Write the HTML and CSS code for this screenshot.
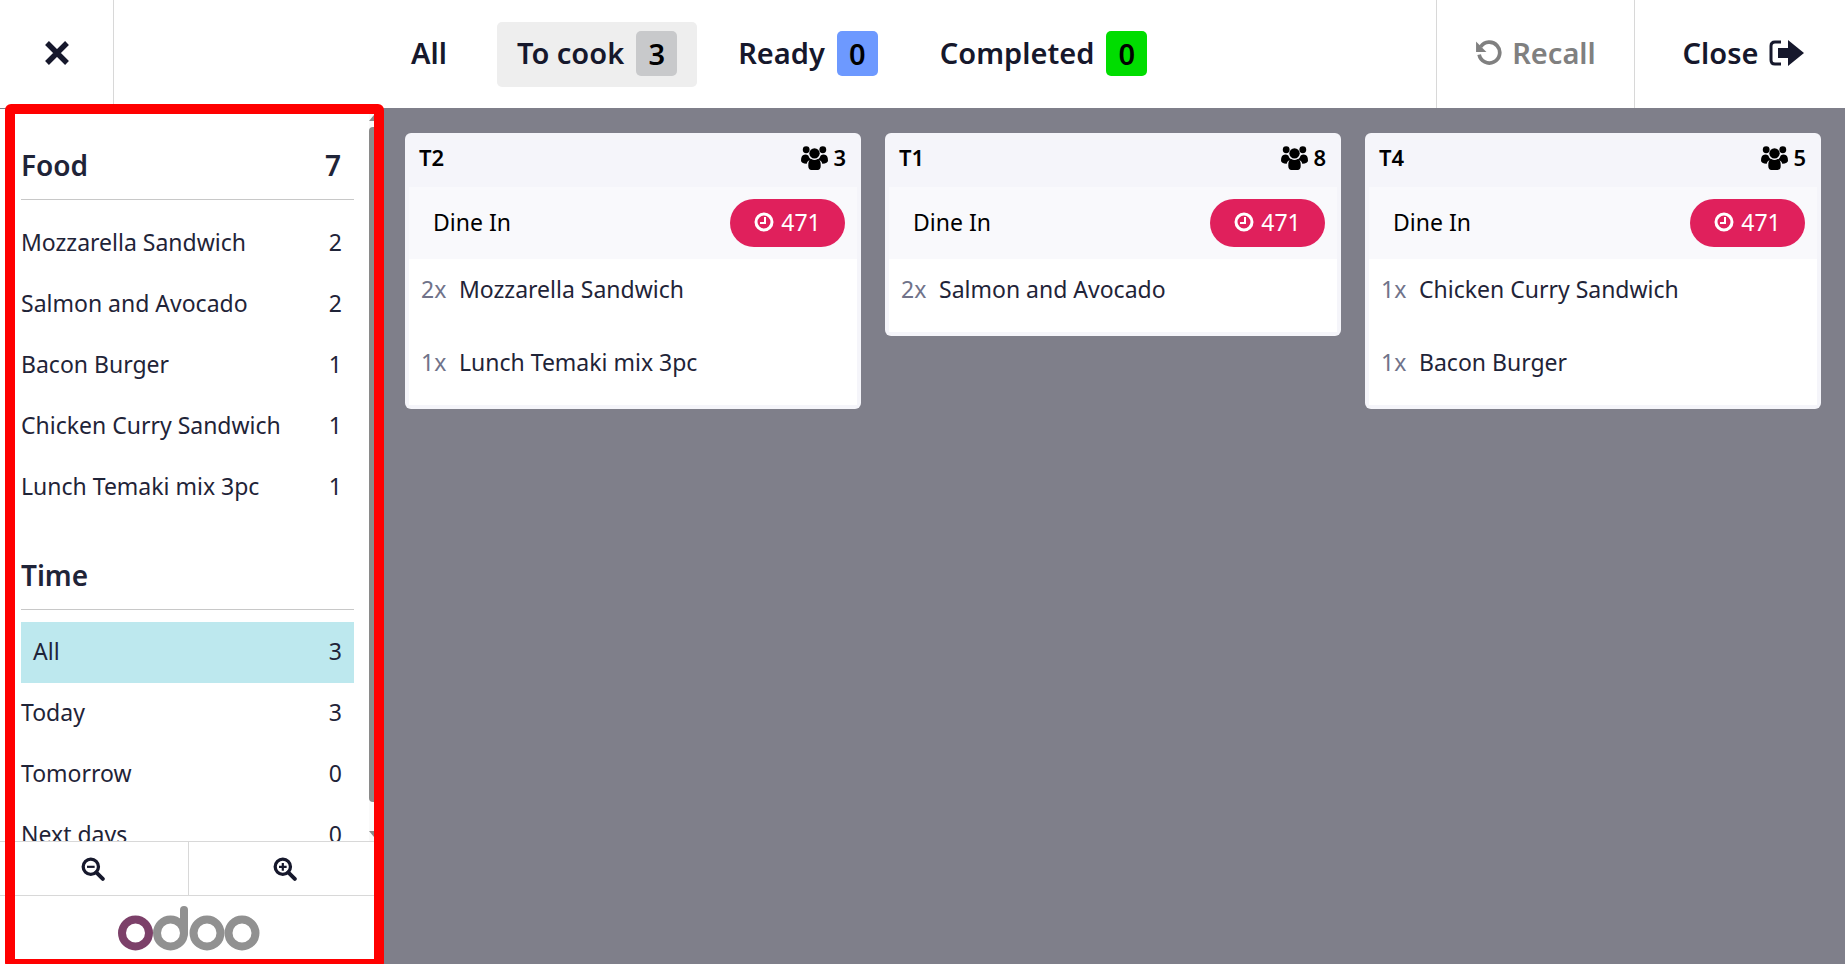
FILE: index.html
```html
<!DOCTYPE html>
<html lang="en">
<head>
    <meta charset="UTF-8">
    <meta name="viewport" content="width=device-width, initial-scale=1.0">
    <title>Kitchen Display</title>
    <link rel="stylesheet" href="styles.css">
</head>
<body>
    <div class="topbar">
        <button class="close-x">
            <svg width="28" height="28" viewBox="0 0 28 28"><path d="M4 4L24 24M24 4L4 24" stroke="#16182c" stroke-width="5.4" fill="none"/></svg>
        </button>
        <div class="tabs">
            <div class="tab tab-all">All</div>
            <div class="tab tab-active">To cook <span class="count count-grey">3</span></div>
            <div class="tab tab-ready">Ready <span class="count count-blue">0</span></div>
            <div class="tab">Completed <span class="count count-green">0</span></div>
        </div>
        <button class="top-btn top-recall">
            <svg width="27" height="27" viewBox="0 0 26 26"><path d="M5.5 7.5A10 10 0 1 1 4 15" stroke="#808080" stroke-width="3.6" fill="none"/><path d="M1 2.500L11 12.500H1Z" fill="#808080"/></svg>
            <span>Recall</span>
        </button>
        <button class="top-btn top-close">
            <span>Close</span>
            <svg width="36" height="28" viewBox="0 0 36 28"><path d="M12 3H6Q2 3 2 7V21Q2 25 6 25H12" stroke="#16182c" stroke-width="3" fill="none"/><path d="M9 9H19V1L35 14L19 27V19H9Z" fill="#16182c"/></svg>
        </button>
    </div>

    <div class="main">
        <div class="sidebar">
            <div class="filters-wrap">
                <div class="filters">
                    <div class="filter-title"><span>Food</span><span>7</span></div>
                    <div class="filter-row"><span>Mozzarella Sandwich</span><span>2</span></div>
                    <div class="filter-row"><span>Salmon and Avocado</span><span>2</span></div>
                    <div class="filter-row"><span>Bacon Burger</span><span>1</span></div>
                    <div class="filter-row"><span>Chicken Curry Sandwich</span><span>1</span></div>
                    <div class="filter-row"><span>Lunch Temaki mix 3pc</span><span>1</span></div>

                    <div class="filter-title filter-title-time"><span>Time</span></div>
                    <div class="filter-row filter-selected"><span>All</span><span>3</span></div>
                    <div class="filter-row"><span>Today</span><span>3</span></div>
                    <div class="filter-row"><span>Tomorrow</span><span>0</span></div>
                    <div class="filter-row"><span>Next days</span><span>0</span></div>
                </div>
                <div class="scrollbar">
                    <div class="scroll-up"></div>
                    <div class="scroll-thumb"></div>
                    <div class="scroll-down"></div>
                </div>
            </div>
            <div class="zoom-btns">
                <button class="zoom-btn">
                    <svg width="24" height="24" viewBox="0 0 22 22"><circle cx="9" cy="9" r="7" stroke="#16182c" stroke-width="3" fill="none"/><path d="M14 14L20 20" stroke="#16182c" stroke-width="3.600" stroke-linecap="round"/><path d="M5.500 9H12.500" stroke="#16182c" stroke-width="2"/></svg>
                </button>
                <button class="zoom-btn">
                    <svg width="24" height="24" viewBox="0 0 22 22"><circle cx="9" cy="9" r="7" stroke="#16182c" stroke-width="3" fill="none"/><path d="M14 14L20 20" stroke="#16182c" stroke-width="3.600" stroke-linecap="round"/><path d="M5.500 9H12.500M9 5.500V12.500" stroke="#16182c" stroke-width="2"/></svg>
                </button>
            </div>
            <div class="logo">
                <svg width="142" height="58" viewBox="0 0 142 58">
                    <circle cx="17.500" cy="37" r="13.500" stroke="#7c4069" stroke-width="8" fill="none"/>
                    <circle cx="52.500" cy="37" r="13.500" stroke="#919191" stroke-width="8" fill="none"/>
                    <path d="M66 37V14" stroke="#919191" stroke-width="8" stroke-linecap="round"/>
                    <circle cx="89" cy="37" r="13.500" stroke="#919191" stroke-width="8" fill="none"/>
                    <circle cx="124" cy="37" r="13.500" stroke="#919191" stroke-width="8" fill="none"/>
                </svg>
            </div>
        </div>

        <div class="orders">
            <div class="card">
                <div class="card-head">
                    <span>T2</span>
                    <span class="guests"><svg class="ico-users" viewBox="0 0 26 24"><use href="#users"/></svg> 3</span>
                </div>
                <div class="card-type">
                    <span class="type-name">Dine In</span>
                    <span class="timer"><svg class="ico-clock" viewBox="0 0 20 20"><use href="#clock"/></svg> 471</span>
                </div>
                <div class="card-items">
                    <div class="item"><span class="qty">2x</span><span>Mozzarella Sandwich</span></div>
                    <div class="item"><span class="qty">1x</span><span>Lunch Temaki mix 3pc</span></div>
                </div>
            </div>
            <div class="card">
                <div class="card-head">
                    <span>T1</span>
                    <span class="guests"><svg class="ico-users" viewBox="0 0 26 24"><use href="#users"/></svg> 8</span>
                </div>
                <div class="card-type">
                    <span class="type-name">Dine In</span>
                    <span class="timer"><svg class="ico-clock" viewBox="0 0 20 20"><use href="#clock"/></svg> 471</span>
                </div>
                <div class="card-items">
                    <div class="item"><span class="qty">2x</span><span>Salmon and Avocado</span></div>
                </div>
            </div>
            <div class="card">
                <div class="card-head">
                    <span>T4</span>
                    <span class="guests"><svg class="ico-users" viewBox="0 0 26 24"><use href="#users"/></svg> 5</span>
                </div>
                <div class="card-type">
                    <span class="type-name">Dine In</span>
                    <span class="timer"><svg class="ico-clock" viewBox="0 0 20 20"><use href="#clock"/></svg> 471</span>
                </div>
                <div class="card-items">
                    <div class="item"><span class="qty">1x</span><span>Chicken Curry Sandwich</span></div>
                    <div class="item"><span class="qty">1x</span><span>Bacon Burger</span></div>
                </div>
            </div>
        </div>
    </div>

    <div class="red-frame"></div>

    <svg class="defs" width="0" height="0">
        <symbol id="users" viewBox="0 0 26 24">
            <circle cx="13" cy="8" r="5"/>
            <circle cx="5" cy="4.500" r="3.300"/>
            <circle cx="21" cy="4.500" r="3.300"/>
            <path d="M0 15Q0 9 4 9Q6 9 7 10Q8 13 10 14Q6 15 5.500 18Q0 18 0 15Z"/>
            <path d="M26 15Q26 9 22 9Q20 9 19 10Q18 13 16 14Q20 15 20.500 18Q26 18 26 15Z"/>
            <path d="M7 20Q7 13.500 10 13.500Q13 15.500 16 13.500Q19 13.500 19 20Q19 24 16 24H10Q7 24 7 20Z"/>
        </symbol>
        <symbol id="clock" viewBox="0 0 20 20">
            <circle cx="10" cy="10" r="8" stroke="#fff" stroke-width="3" fill="none"/>
            <path d="M11 5V11H6" stroke="#fff" stroke-width="2" fill="none"/>
        </symbol>
    </svg>
</body>
</html>
```

FILE: styles.css
```css
* {
    box-sizing: border-box;
}
html, body {
    height: 100%;
}
body {
    margin: 0;
    display: flex;
    flex-direction: column;
    overflow: hidden;
    font-family: "Noto Sans", sans-serif;
    font-size: 23px;
    color: #1f2438;
    background: #7f7f8a;
}
button {
    font: inherit;
    color: inherit;
    background: white;
    border: none;
    padding: 0;
}
.defs {
    position: absolute;
}

/* barra superior */
.topbar {
    display: flex;
    height: 109px;
    flex-shrink: 0;
    background: white;
    border-bottom: 1px solid #7f7f8a;
}
.close-x {
    width: 114px;
    border-right: 1px solid #d8d8d8;
    display: flex;
    align-items: center;
    justify-content: center;
    padding: 0 0 2px 1px;
}
.tabs {
    flex: 1;
    display: flex;
    align-items: center;
    gap: 23px;
    padding-left: 277px;
    font-size: 29px;
    font-weight: 600;
    color: #16182c;
}
.tab {
    display: flex;
    align-items: center;
    gap: 12px;
    height: 65px;
    padding: 0 20px 3px;
    border-radius: 5px;
}
.tab-all {
    margin-right: 7px;
}
.tab-active {
    background: #eeeeee;
    margin-right: -2px;
}
.tab-ready {
    margin-right: -1px;
}
.count {
    width: 41px;
    height: 45px;
    border-radius: 5px;
    display: flex;
    align-items: center;
    justify-content: center;
    color: #000;
    margin-top: 2px;
}
.count-grey {
    background: #c8c9cb;
}
.count-blue {
    background: #6d99ff;
}
.count-green {
    background: #00dd00;
}
.top-btn {
    display: flex;
    align-items: center;
    justify-content: center;
    gap: 10px;
    font-size: 29px;
    font-weight: 600;
    border-left: 1px solid #d8d8d8;
    padding-bottom: 3px;
}
.top-recall {
    width: 198px;
    color: #808080;
}
.top-close {
    width: 211px;
    padding-left: 8px;
    gap: 11px;
    color: #16182c;
}

.main {
    flex: 1;
    display: flex;
    min-height: 0;
}

/* barra lateral */
.sidebar {
    width: 378px;
    flex-shrink: 0;
    display: flex;
    flex-direction: column;
    background: white;
}
.filters-wrap {
    flex: 1;
    min-height: 0;
    position: relative;
    border-bottom: 1px solid #d8d8d8;
}
.filters {
    height: 100%;
    overflow: hidden;
    padding: 16px 24px 0 21px;
}
.filter-title {
    display: flex;
    justify-content: space-between;
    align-items: center;
    height: 64px;
    padding: 0 13px 5px 0;
    margin: 11px 0 13px;
    font-size: 28px;
    font-weight: 600;
    border-bottom: 1px solid #c8c8c8;
    color: #1f2438;
}
.filter-title-time {
    margin: 28px 0 12px;
}
.filter-row {
    display: flex;
    justify-content: space-between;
    align-items: center;
    height: 61px;
    padding: 0 12px 3px 0;
}
.filter-selected {
    background: #bde8ee;
    padding-left: 12px;
}

/* scrollbar dibujada a mano, headless no la muestra */
.scrollbar {
    position: absolute;
    top: 0;
    right: 0;
    bottom: 0;
    width: 9px;
    background: #fafafa;
}
.scroll-up, .scroll-down {
    position: absolute;
    left: 0;
    width: 0;
    height: 0;
    border-left: 5px solid transparent;
    border-right: 5px solid transparent;
}
.scroll-up {
    top: 6px;
    border-bottom: 6px solid #8a8a8a;
}
.scroll-down {
    bottom: 4px;
    border-top: 6px solid #8a8a8a;
}
.scroll-thumb {
    margin-top: 18px;
    height: 675px;
    background: #8a8a8a;
    border-radius: 4px 0 0 4px;
}
.zoom-btns {
    display: flex;
    height: 54px;
    flex-shrink: 0;
    border-bottom: 1px solid #d8d8d8;
}
.zoom-btn {
    flex: 1;
    display: flex;
    align-items: center;
    justify-content: center;
    padding-right: 2px;
}
.zoom-btn + .zoom-btn {
    border-left: 1px solid #d8d8d8;
    padding: 0 0 0 3px;
}
.zoom-btn:first-child {
    flex: 0 0 188px;
}
.logo {
    height: 68px;
    flex-shrink: 0;
    display: flex;
    justify-content: center;
}

/* tarjetas de pedidos */
.orders {
    flex: 1;
    display: grid;
    grid-template-columns: repeat(3, 1fr);
    gap: 24px;
    align-items: start;
    padding: 24px 24px 0 27px;
}
.card {
    background: #f5f5fa;
    border-radius: 6px;
    padding: 0 4px 4px;
}
.card-head {
    display: flex;
    justify-content: space-between;
    align-items: center;
    height: 54px;
    padding: 0 11px 6px 10px;
    font-size: 22px;
    font-weight: 600;
    color: #000;
}
.guests {
    display: flex;
    align-items: center;
    gap: 5px;
}
.ico-users {
    width: 27px;
    height: 25px;
    fill: #000;
}
.card-type {
    display: flex;
    justify-content: space-between;
    align-items: center;
    height: 72px;
    padding: 0 12px 0 24px;
    background: #f9f9fc;
    color: #000;
}
.type-name {
    padding-bottom: 2px;
}
.timer {
    display: flex;
    align-items: center;
    justify-content: center;
    gap: 7px;
    width: 115px;
    height: 48px;
    padding-bottom: 2px;
    border-radius: 24px;
    background: #e0205c;
    color: white;
}
.ico-clock {
    width: 20px;
    height: 20px;
}
.card-items {
    background: white;
}
.item {
    display: flex;
    height: 73px;
    padding: 12px 12px 0;
    line-height: 36px;
    gap: 13px;
}
.qty {
    color: #70738a;
    width: 25px;
}

/* marco rojo de resaltado */
.red-frame {
    position: absolute;
    left: 5px;
    top: 104px;
    width: 379px;
    height: 865px;
    border: 10px solid #ff0000;
    border-radius: 6px;
}
```
